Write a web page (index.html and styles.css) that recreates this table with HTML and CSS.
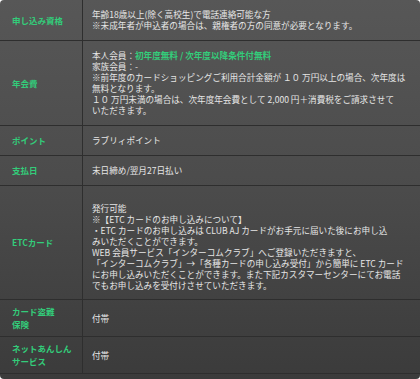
FILE: index.html
```html
<!DOCTYPE html>
<html lang="ja">
<head>
<meta charset="utf-8">
<link rel="stylesheet" href="styles.css">
</head>
<body>
<div class="spec">
  <div class="label">申し込み資格</div>
  <div class="value"><p class="text">年齢18歳以上(除く高校生)で電話連絡可能な方<br>※未成年者が申込者の場合は、親権者の方の同意が必要となります。</p></div>

  <div class="label">年会費</div>
  <div class="value"><p class="text">本人会員：<span class="hl">初年度無料 / 次年度以降条件付無料</span><br>家族会員：-<br>※前年度のカードショッピングご利用合計金額が １０ 万円以上の場合、次年度は<br>無料となります。<br>１０ 万円未満の場合は、次年度年会費として 2,000 円＋消費税をご請求させて<br>いただきます。</p></div>

  <div class="label">ポイント</div>
  <div class="value"><p class="text">ラブリィポイント</p></div>

  <div class="label">支払日</div>
  <div class="value"><p class="text">末日締め/翌月27日払い</p></div>

  <div class="label">ETCカード</div>
  <div class="value value-etc"><p class="text">発行可能<br>※【ETC カードのお申し込みについて】<br>・ETC カードのお申し込みは CLUB AJ カードがお手元に届いた後にお申し込<br>みいただくことができます。<br>WEB 会員サービス「インターコムクラブ」へご登録いただきますと、<br>「インターコムクラブ」→「各種カードの申し込み受付」から簡単に ETC カード<br>にお申し込みいただくことができます。また下記カスタマーセンターにてお電話<br>でもお申し込みを受付けさせていただきます。</p></div>

  <div class="label label-tall">カード盗難<br>保険</div>
  <div class="value"><p class="text">付帯</p></div>

  <div class="label label-tall">ネットあんしん<br>サービス</div>
  <div class="value"><p class="text">付帯</p></div>
</div>
</body>
</html>
```

FILE: styles.css
```css
html, body {
  margin: 0;
  padding: 0;
  background: #ffffff;
}

.spec {
  width: 420px;
  height: 379px;
  display: grid;
  grid-template-columns: 83px 1fr;
  grid-auto-rows: min-content;
  background: linear-gradient(to bottom, #575757 0%, #4b4b4b 50%, #3b3b3b 100%);
  border-radius: 4px;
  overflow: hidden;
  font-family: "Noto Sans CJK JP", "Noto Sans", sans-serif;
}

.label {
  display: flex;
  align-items: center;
  padding: 0 0 0 12px;
  border-right: 1px solid #2e2e2e;
  border-bottom: 1px solid #2e2e2e;
  color: #33cc7a;
  font-weight: bold;
  font-size: 8.5px;
  line-height: 13px;
  white-space: nowrap;
}

.label-tall {
  padding-top: 5px;
  padding-bottom: 5px;
}

.value {
  display: flex;
  align-items: center;
  padding: 9px 0 9px 9px;
  border-bottom: 1px solid #2e2e2e;
  color: #e6e6e6;
  font-size: 8.6px;
  line-height: 11px;
  white-space: nowrap;
}

.value-etc {
  padding-top: 17px;
  padding-bottom: 8px;
}

.text {
  margin: 0;
}

.hl {
  color: #33cc7a;
  font-weight: bold;
}
```
